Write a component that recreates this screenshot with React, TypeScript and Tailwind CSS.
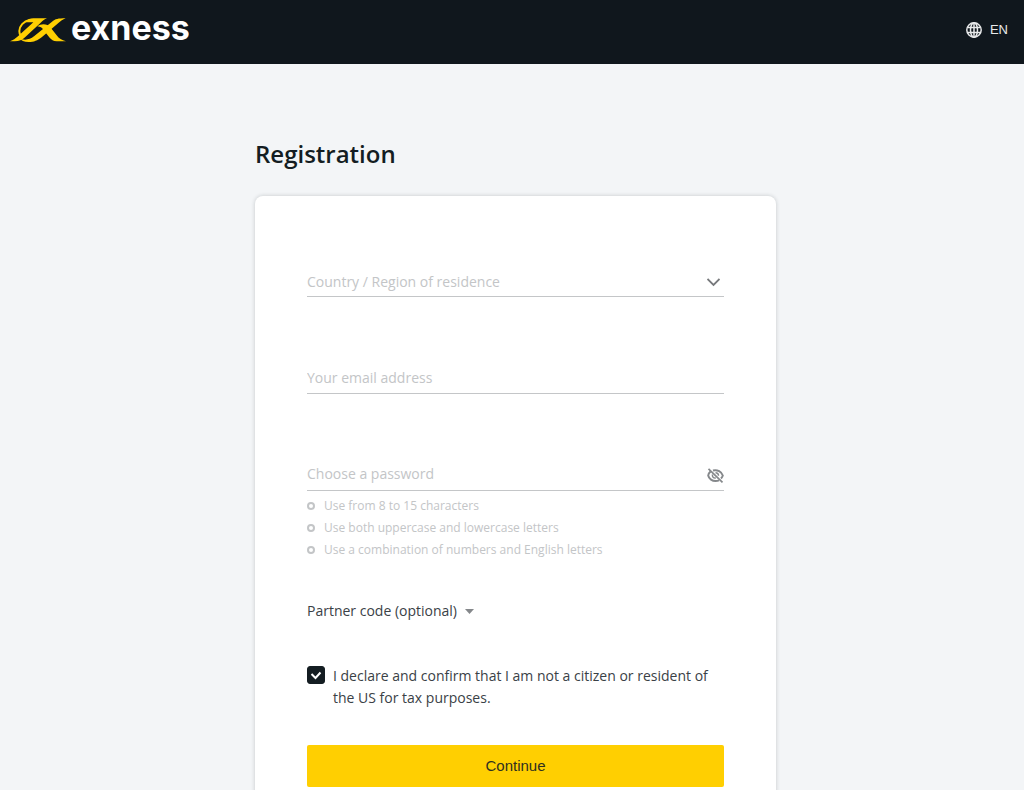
import { useState } from "react";

const rules = [
  "Use from 8 to 15 characters",
  "Use both uppercase and lowercase letters",
  "Use a combination of numbers and English letters",
];

function LogoMark() {
  return (
    <svg width="57" height="26" viewBox="0 0 171 78" fill="none" aria-hidden="true">
      <path d="M0 73C10 69 16 65 24 58L70 16H46C52 8 60 4 70 4H111C104 7 98 11 92 17L46 60C36 69 28 73 14 73Z" fill="#ffcf01" />
      <path d="M60 8C40 12 28 28 28 42C28 48 29 52 32 56" stroke="#ffcf01" strokeWidth="6" />
      <path d="M28 62C38 71 58 70 72 58L126 14C136 6 144 4 167 4C158 8 152 12 146 17L96 60C82 71 72 75 56 75C42 75 33 71 28 62Z" fill="#ffcf01" />
      <path d="M82 28C94 18 113 20 121 31L140 55C147 65 155 70 168 73H140C130 72 124 68 119 62L100 38C96 32 91 29 82 28Z" fill="#ffcf01" />
    </svg>
  );
}

function Globe() {
  return (
    <svg width="16" height="16" viewBox="0 0 16 16" fill="none" stroke="#e8e9ea" strokeWidth="1.5" aria-hidden="true">
      <circle cx="8" cy="8" r="7.200" />
      <ellipse cx="8" cy="8" rx="3.500" ry="7.200" />
      <path d="M8 1V15M1.500 5.500H14.500M1.500 10.500H14.500" />
    </svg>
  );
}

function HiddenEye() {
  return (
    <svg width="17" height="15" viewBox="0 0 17 15" fill="none" stroke="#85888b" strokeWidth="2" aria-hidden="true">
      <path d="M3.500 3.500C1.800 5 1.200 6.500 1.200 7.500C2 11 5.500 13 8.500 13C9.800 13 11 12.800 12 12.300" />
      <path d="M6 2.500C10.500 1.300 14.500 3.800 15.800 7.500C15.500 8.500 15 9.500 14 10.500" />
      <path d="M5.500 6.500C5 9 6.500 10.300 8.800 10M8.500 4.800C10.500 4.800 11.600 6 11.500 7.800" strokeWidth="1.500" />
      <path d="M1.500 0.800L15.500 14.300" strokeWidth="1.700" />
    </svg>
  );
}

export default function App() {
  const [agreed, setAgreed] = useState(true);
  return (
    <div className="min-h-screen bg-[#f3f5f7] font-['Open_Sans','Noto_Sans',sans-serif] text-[#141d22]">
      <header className="flex h-16 items-center justify-between bg-[#10171d] pr-4 pb-1 pl-[10px]">
        <a href="#home" className="flex items-center gap-1" aria-label="exness">
          <LogoMark />
          <span className="pb-1 font-['Inter',sans-serif] text-[34px] leading-10 font-bold text-white">exness</span>
        </a>
        <button type="button" className="flex items-center gap-2 font-['Liberation_Sans',Arial,sans-serif] text-[13px] text-[#e8e9ea]">
          <Globe />
          EN
        </button>
      </header>
      <main className="px-4 pt-[72px] sm:pr-0 sm:pl-[7px]">
        <div className="mx-auto w-full max-w-[521px]">
          <h1 className="text-2xl leading-9 font-semibold">Registration</h1>
          <form className="mt-6 rounded-lg bg-white px-[52px] pt-[68px] pb-12 shadow-[0_0_4px_rgba(20,29,34,0.2)]" onSubmit={(e) => e.preventDefault()}>
            <div className="relative">
              <select aria-label="Country / Region of residence" defaultValue="" className="block h-[33px] w-full appearance-none border-b border-[#c4c6c8] bg-transparent pt-1 text-sm text-[#c3c5c7] outline-none">
                <option value="">Country / Region of residence</option>
              </select>
              <svg className="pointer-events-none absolute top-[14px] right-1" width="13" height="9" viewBox="0 0 13 9" fill="none" stroke="#77797c" strokeWidth="1.800" aria-hidden="true">
                <path d="M0.500 1L6.500 7L12.500 1" />
              </svg>
            </div>
            <input type="email" aria-label="Your email address" placeholder="Your email address" className="mt-16 block h-[33px] w-full border-b border-[#c4c6c8] bg-transparent text-sm outline-none placeholder:text-[#c3c5c7]" />
            <div className="mt-16 flex h-[33px] items-center border-b border-[#c4c6c8]">
              <input type="password" aria-label="Choose a password" placeholder="Choose a password" className="min-w-0 flex-1 bg-transparent text-sm outline-none placeholder:text-[#c3c5c7]" />
              <button type="button" aria-label="Show password" className="pt-0.5">
                <HiddenEye />
              </button>
            </div>
            <ul className="mt-1 text-xs leading-[22px] text-[#c3c5c7]">
              {rules.map((rule) => (
                <li key={rule} className="flex items-center gap-[9px]">
                  <span className="size-2 rounded-full border-2 border-[#c3c5c7]" />
                  {rule}
                </li>
              ))}
            </ul>
            <button type="button" className="mt-[38px] flex items-center gap-2 text-sm leading-6 text-[#3a4146]">
              Partner code (optional)
              <svg width="9" height="5" viewBox="0 0 9 5" fill="#85888b" aria-hidden="true">
                <path d="M0 0H9L4.500 5Z" />
              </svg>
            </button>
            <div className="mt-[42px] flex items-start gap-2">
              <span className="relative mt-px size-[18px] shrink-0">
                <input id="declare" type="checkbox" checked={agreed} onChange={(e) => setAgreed(e.target.checked)} className="block size-[18px] appearance-none rounded-[3px] border border-[#141d22] checked:bg-[#141d22]" />
                <svg className="pointer-events-none absolute inset-0" width="18" height="18" viewBox="0 0 18 18" fill="none" stroke="white" strokeWidth="2" aria-hidden="true">
                  <path d="M4.500 8L8.500 12L13.500 6.500" />
                </svg>
              </span>
              <label htmlFor="declare" className="text-sm leading-[22px] text-[#3a4146]">
                I declare and confirm that I am not a citizen or resident of the US for tax purposes.
              </label>
            </div>
            <button type="submit" className="mt-9 h-[42px] w-full rounded-xs bg-[#ffcf01] font-['Liberation_Sans',Arial,sans-serif] text-[15px] text-[#2f3020]">
              Continue
            </button>
          </form>
        </div>
      </main>
    </div>
  );
}
